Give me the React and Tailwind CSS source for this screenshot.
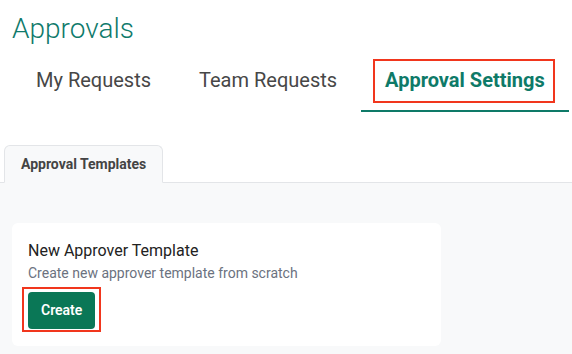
import React, { useState } from "react";

// Approvals page - top tabs, sub tabs and the template card
const App = () => {
  const [tab, setTab] = useState("settings");

  const tabs = [
    { id: "mine", label: "My Requests" },
    { id: "team", label: "Team Requests" },
    { id: "settings", label: "Approval Settings" },
  ];

  return (
    <div className="min-h-screen flex flex-col bg-white font-['Roboto',sans-serif]">
      {/* page title */}
      <h1 className="px-3 pt-3 text-[28px] leading-[34px] font-light text-[#0f7a6b]">
        Approvals
      </h1>

      {/* main tabs */}
      <div className="flex pl-3 mt-1">
        {tabs.map((t) => {
          const active = tab === t.id;
          return (
            <button
              key={t.id}
              onClick={() => setTab(t.id)}
              className={
                active
                  ? "px-6 py-4 border-b-2 border-[#0e7a68] text-[20px] leading-7 font-bold text-[#0e7a68]"
                  : "px-6 py-4 border-b-2 border-transparent text-[20px] leading-7 font-normal text-[#474747]"
              }
            >
              <span className="relative inline-block">
                {t.label}
                {/* highlight box */}
                {active && (
                  <span className="absolute -left-[12px] -right-[10px] -top-[7px] -bottom-[9px] border-[2.5px] border-[#f1361d] pointer-events-none"></span>
                )}
              </span>
            </button>
          );
        })}
      </div>

      {/* sub tabs */}
      <div className="flex pl-1 mt-[33px] border-b border-[#e3e5e8]">
        <div className="-mb-px px-[16px] py-[10px] bg-[#f8f9fa] border border-[#e3e5e8] border-b-[#f8f9fa] rounded-t-md text-[14px] leading-4 font-bold text-[#444]">
          Approval Templates
        </div>
      </div>

      {/* panel */}
      <div className="flex-1 bg-[#f8f9fa] px-3 pt-10">
        <div className="w-[429px] bg-white rounded-md px-4 pt-4 pb-[17px]">
          <h2 className="text-[16px] leading-6 font-normal text-[#222]">New Approver Template</h2>
          <p className="text-[14px] leading-5 text-[#6b7280]">Create new approver template from scratch</p>
          <div className="mt-[9px] relative inline-block">
            <button className="h-[37px] px-[13px] bg-[#0a7756] rounded text-white text-[14px] font-semibold">
              Create
            </button>
            <span className="absolute -left-[6px] -right-[6px] -top-[5px] -bottom-[3px] border-[2.5px] border-[#f1361d] pointer-events-none"></span>
          </div>
        </div>
      </div>
    </div>
  );
};

export default App;
